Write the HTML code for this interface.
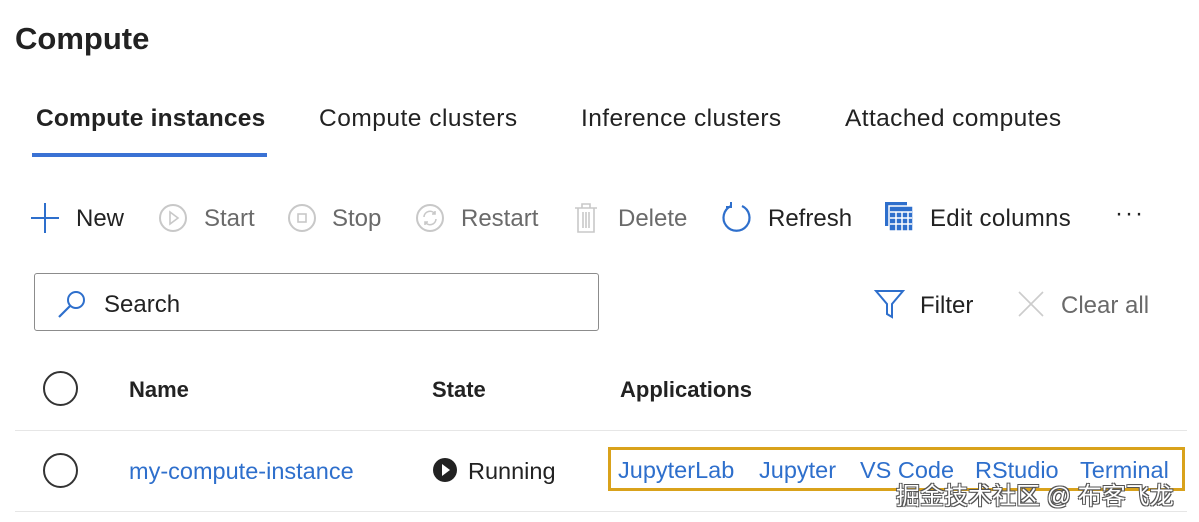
<!DOCTYPE html><html><head><meta charset="utf-8"><style>
body{margin:0;width:1199px;height:522px;background:#fff;font-family:"Liberation Sans",sans-serif;color:#222;position:relative;overflow:hidden}
.a{position:absolute;white-space:nowrap}
.t{font-size:24.5px;top:105px}
.tb{font-size:24px;top:205px}
.g{color:#6a6a6a}
.h{font-size:22px;font-weight:bold;top:377px}
.lk{color:#2e6fcc;font-size:23.5px}
</style></head><body>
<div class="a" style="left:15px;top:21px;font-size:31px;font-weight:bold;color:#222">Compute</div>
<div class="a t" style="left:36px;font-weight:bold;letter-spacing:0.2px">Compute instances</div>
<div class="a t" style="left:319px;letter-spacing:0.5px">Compute clusters</div>
<div class="a t" style="left:581px;letter-spacing:0.4px">Inference clusters</div>
<div class="a t" style="left:845px;letter-spacing:0.4px">Attached computes</div>
<div class="a" style="left:32px;top:153px;width:235px;height:4px;background:#3a72d4"></div>

<svg class="a" style="left:28px;top:201px" width="34" height="34"><path d="M3 17H31M17 2V32" stroke="#2e6fcc" stroke-width="2"/></svg>
<div class="a tb" style="left:76px">New</div>
<svg class="a" style="left:157px;top:202px" width="32" height="32"><circle cx="16" cy="16" r="13" fill="none" stroke="#c8c8c8" stroke-width="2"/><path d="M13 10L21 16L13 22Z" fill="none" stroke="#c8c8c8" stroke-width="1.6"/></svg>
<div class="a tb g" style="left:204px">Start</div>
<svg class="a" style="left:286px;top:202px" width="32" height="32"><circle cx="16" cy="16" r="13" fill="none" stroke="#c8c8c8" stroke-width="2"/><rect x="12" y="12" width="8" height="8" fill="none" stroke="#c8c8c8" stroke-width="1.6"/></svg>
<div class="a tb g" style="left:332px">Stop</div>
<svg class="a" style="left:414px;top:202px" width="32" height="32"><circle cx="16" cy="16" r="13" fill="none" stroke="#c8c8c8" stroke-width="2"/><path d="M10 15A6 6 0 0 1 21 12M22 17A6 6 0 0 1 11 20M21 9V12H18M11 23V20H14" fill="none" stroke="#c8c8c8" stroke-width="1.6"/></svg>
<div class="a tb g" style="left:461px">Restart</div>
<svg class="a" style="left:572px;top:201px" width="28" height="34"><path d="M3 7H25M10 7V3H18V7M6 7V31H22V7M11 11V27M14 11V27M17 11V27" fill="none" stroke="#c8c8c8" stroke-width="1.6"/></svg>
<div class="a tb g" style="left:618px">Delete</div>
<svg class="a" style="left:720px;top:200px" width="34" height="36"><path d="M11 6A13 13 0 1 0 22 6" fill="none" stroke="#2e6fcc" stroke-width="2.2"/><path d="M11 2V7H6" fill="none" stroke="#2e6fcc" stroke-width="2"/></svg>
<div class="a tb" style="left:768px">Refresh</div>
<svg class="a" style="left:884px;top:200px" width="32" height="34"><rect x="1" y="2" width="22" height="24" fill="#2e6fcc"/><rect x="5" y="6" width="24" height="25" fill="#2e6fcc" stroke="#fff" stroke-width="1.5"/><path d="M6 12H28M6 18H28M6 24H28M12 12V31M18 12V31M24 12V31" stroke="#fff" stroke-width="1.5"/></svg>
<div class="a tb" style="left:930px;letter-spacing:0.3px">Edit columns</div>
<div class="a" style="left:1115px;top:200px;font-size:24px;letter-spacing:2px">···</div>

<div class="a" style="left:34px;top:273px;width:563px;height:56px;border:1.5px solid #8c8c8c;border-radius:3px"></div>
<svg class="a" style="left:56px;top:288px" width="34" height="32"><circle cx="20" cy="12" r="8" fill="none" stroke="#2e6fcc" stroke-width="2"/><path d="M14 18L3 29" stroke="#2e6fcc" stroke-width="2.2"/></svg>
<div class="a" style="left:104px;top:291px;font-size:24px">Search</div>
<svg class="a" style="left:873px;top:288px" width="34" height="32"><path d="M3 3H30L19 16V29L14 26V16Z" fill="none" stroke="#2e6fcc" stroke-width="2"/></svg>
<div class="a" style="left:920px;top:292px;font-size:24px">Filter</div>
<svg class="a" style="left:1016px;top:290px" width="30" height="28"><path d="M3 2L27 26M27 2L3 26" stroke="#ccc" stroke-width="1.6"/></svg>
<div class="a g" style="left:1061px;top:292px;font-size:24px">Clear all</div>

<div class="a" style="left:43px;top:371px;width:31px;height:31px;border:2px solid #333;border-radius:50%"></div>
<div class="a h" style="left:129px">Name</div>
<div class="a h" style="left:432px">State</div>
<div class="a h" style="left:620px">Applications</div>
<div class="a" style="left:15px;top:430px;width:1172px;height:1px;background:#e6e6e6"></div>

<div class="a" style="left:43px;top:453px;width:31px;height:31px;border:2px solid #333;border-radius:50%"></div>
<div class="a lk" style="left:129px;top:458px">my-compute-instance</div>
<svg class="a" style="left:431px;top:456px" width="28" height="28"><circle cx="14" cy="14" r="12" fill="#222"/><path d="M11 8L19 14L11 20Z" fill="#fff"/></svg>
<div class="a" style="left:468px;top:458px;font-size:23.5px">Running</div>
<div class="a" style="left:608px;top:447px;width:571px;height:38px;border:3px solid #d9a21b"></div>
<div class="a lk" style="left:618px;top:457px">JupyterLab</div>
<div class="a lk" style="left:759px;top:457px">Jupyter</div>
<div class="a lk" style="left:860px;top:457px">VS Code</div>
<div class="a lk" style="left:975px;top:457px">RStudio</div>
<div class="a lk" style="left:1080px;top:457px">Terminal</div>
<div class="a" style="left:896px;top:476px;font-size:24px;color:#fff;font-family:'Liberation Sans','Noto Sans CJK SC',sans-serif;text-shadow:1px 1px 0 #555,-1px -1px 0 #555,1px -1px 0 #555,-1px 1px 0 #555">掘金技术社区 @ 布客飞龙</div>
<div class="a" style="left:15px;top:511px;width:1172px;height:1px;background:#e6e6e6"></div>
</body></html>
